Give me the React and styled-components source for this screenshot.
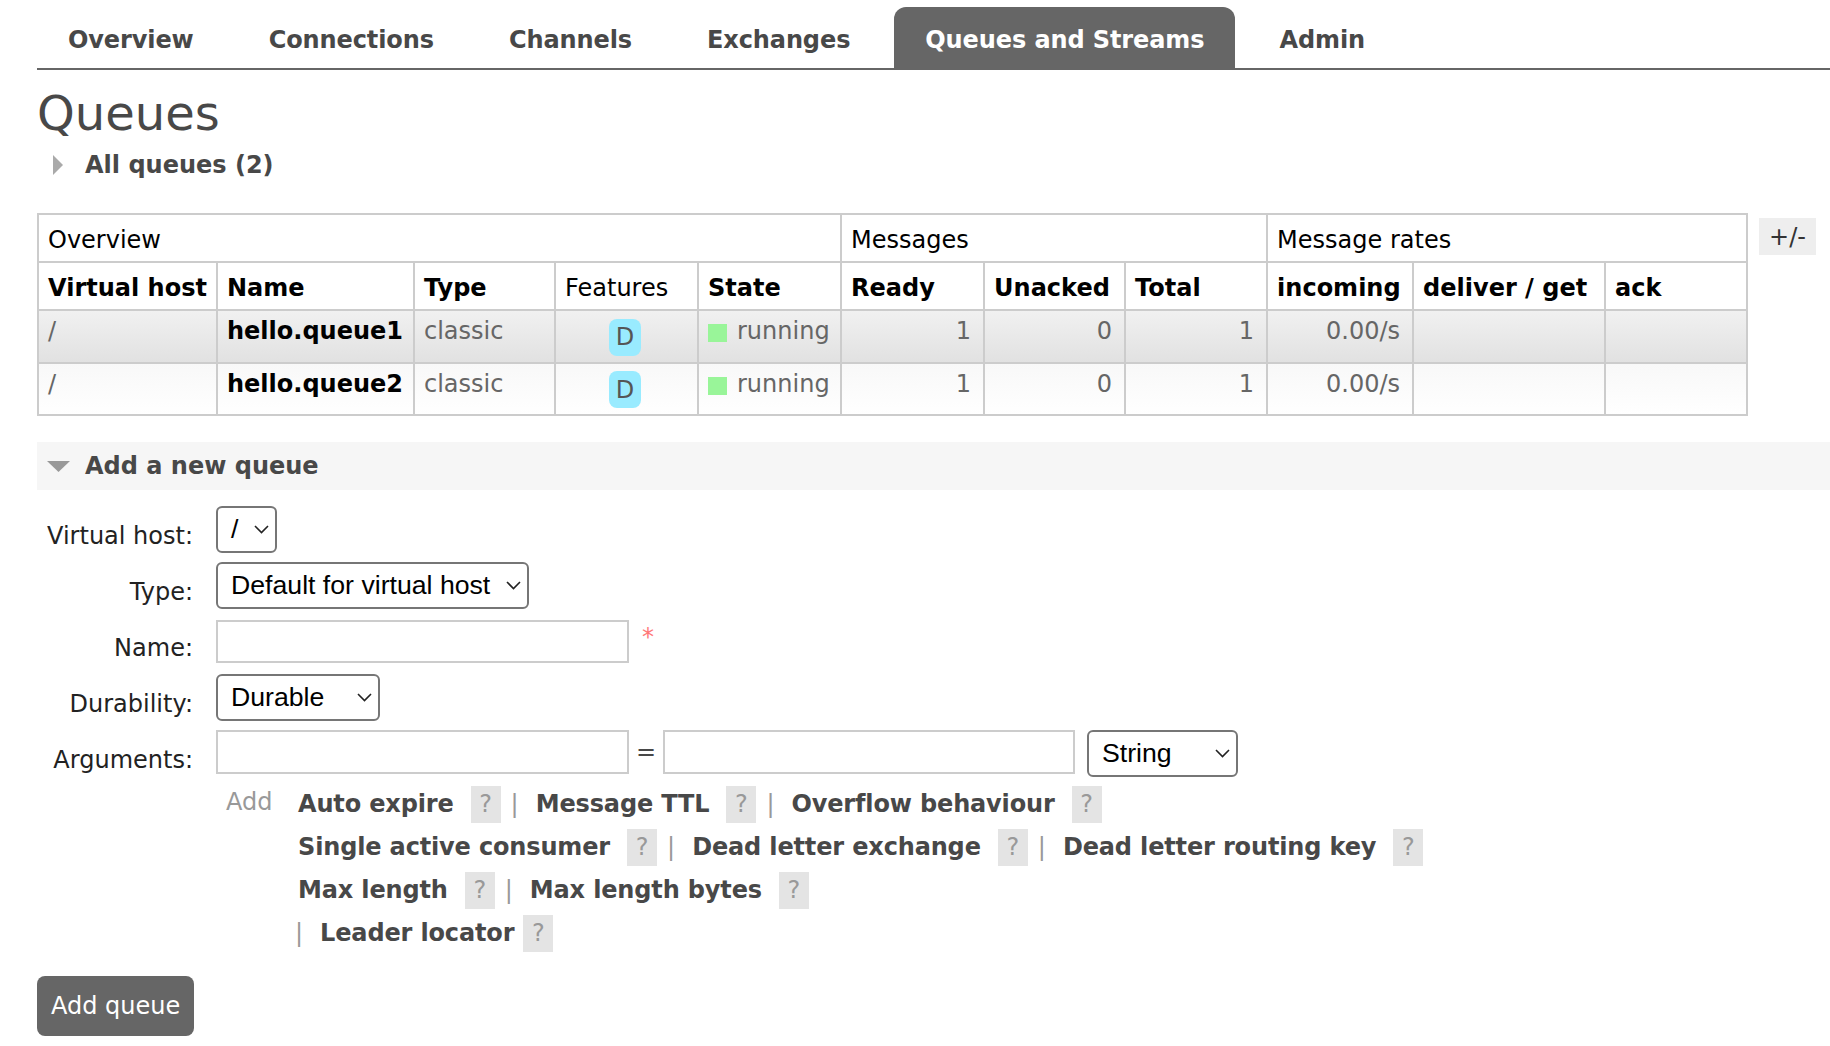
import React from "react";
import styled, { createGlobalStyle } from "styled-components";

const GlobalStyle = createGlobalStyle`
  body {
    margin: 0;
    background: #fff;
    font-family: "DejaVu Sans", Verdana, sans-serif;
    font-size: 24px;
    color: #484848;
  }
`;

const Page = styled.div`
  padding-left: 37px;
`;

const Tabs = styled.ul`
  display: flex;
  gap: 13px;
  margin: 0;
  padding: 7px 0 0;
  list-style: none;
  border-bottom: 2px solid #666;
`;

const Tab = styled.li`
  padding: 19px 31px 14px;
  line-height: 28px;
  font-weight: bold;
  letter-spacing: -0.1px;
  color: ${(p) => (p.$active ? "#fff" : "#484848")};
  background: ${(p) => (p.$active ? "#666" : "transparent")};
  border-radius: 12px 12px 0 0;
`;

const Title = styled.h1`
  margin: 15px 0 0;
  font-size: 48px;
  line-height: 56px;
  font-weight: normal;
  color: #484848;
`;

const Toggle = styled.h2`
  display: flex;
  align-items: center;
  margin: 10px 0 0;
  padding-left: 16px;
  gap: 22px;
  font-size: 24px;
  line-height: 28px;
  font-weight: bold;
  color: #484848;
`;

const TableArea = styled.div`
  display: flex;
  align-items: flex-start;
  margin-top: 34px;
`;

const Table = styled.table`
  border-collapse: collapse;
  table-layout: fixed;
  width: 1709px;
`;

const Th = styled.th`
  border: 2px solid #ccc;
  padding: 11px 12px 7px 9px;
  line-height: 28px;
  text-align: left;
  font-weight: ${(p) => (p.$normal ? "normal" : "bold")};
  color: #000;
  white-space: nowrap;
  overflow: hidden;
`;

const Row = styled.tr`
  background: ${(p) =>
    p.$alt
      ? "linear-gradient(#f8f8f8, #ffffff)"
      : "linear-gradient(#f1f1f1, #e1e1e1)"};
`;

const Td = styled.td`
  border: 2px solid #ccc;
  padding: 6px 12px 6px 9px;
  line-height: 28px;
  vertical-align: top;
  white-space: nowrap;
  color: ${(p) => (p.$strong ? "#000" : "#666")};
  font-weight: ${(p) => (p.$strong ? "bold" : "normal")};
  text-align: ${(p) => p.$align || "left"};
`;

const Badge = styled.abbr`
  display: inline-block;
  padding: 4.5px 7px;
  line-height: 28px;
  background: #99ebff;
  color: #555;
  border-radius: 8px;
  text-decoration: none;
  vertical-align: -6px;
`;

const StatusDot = styled.span`
  display: inline-block;
  width: 19px;
  height: 18px;
  margin-right: 10px;
  background: #99f599;
  vertical-align: -3px;
`;

const ToggleColumns = styled.div`
  margin: 5px 0 0 11px;
  padding: 4.5px 10px;
  line-height: 28px;
  background: #eee;
  color: #333;
`;

const SectionBar = styled.h2`
  display: flex;
  align-items: center;
  gap: 15px;
  margin: 26px 0 0;
  padding: 10px 0 10px 10px;
  background: #f6f6f6;
  font-size: 24px;
  line-height: 28px;
  font-weight: bold;
  color: #484848;
`;

const Form = styled.div`
  margin-top: 11px;
`;

const FormRow = styled.div`
  display: grid;
  grid-template-columns: 156px 1fr;
  column-gap: 23px;
  align-items: center;
  height: ${(p) => (p.$auto ? "auto" : "56px")};
`;

const Label = styled.label`
  text-align: right;
  padding-top: 14px;
  line-height: 28px;
  color: #222;
  white-space: nowrap;
`;

const Controls = styled.div`
  display: flex;
  align-items: ${(p) => p.$align || "center"};
`;

const SelectBox = styled.div`
  box-sizing: border-box;
  display: flex;
  align-items: center;
  justify-content: space-between;
  width: ${(p) => p.$width}px;
  height: 47px;
  padding: 0 6px 0 13px;
  border: 2px solid #767676;
  border-radius: 6px;
  font-family: "Liberation Sans", Arial, sans-serif;
  font-size: 26.67px;
  color: #000;
  background: #fff;
`;

const TextInput = styled.input`
  box-sizing: border-box;
  width: ${(p) => p.$width}px;
  height: ${(p) => p.$height || 44}px;
  border: 2px solid #ccc;
  padding: 0 6px;
  font-size: 24px;
  outline: none;
`;

const Required = styled.span`
  margin: -8px 0 0 13px;
  color: #f77;
`;

const Equals = styled.span`
  width: 34px;
  text-align: center;
  line-height: 44px;
  color: #484848;
`;

const Spacer = styled.span`
  width: 12px;
`;

const AddText = styled.div`
  padding: 2px 0 0 10px;
  line-height: 28px;
  color: #999;
`;

const LinksGrid = styled.div`
  display: grid;
  grid-template-columns: 82px 1fr;
  margin-top: 4.5px;
`;

const LinkLine = styled.div`
  display: flex;
  align-items: center;
  height: 37px;
  margin-left: ${(p) => p.$indent || 0}px;
  & + & {
    margin-top: 6px;
  }
`;

const ArgLink = styled.span`
  font-weight: bold;
  letter-spacing: -0.15px;
  color: #484848;
  white-space: nowrap;
`;

const Help = styled.span`
  display: inline-flex;
  align-items: center;
  justify-content: center;
  width: 30px;
  height: 37px;
  margin-left: ${(p) => (p.$gap === undefined ? 17 : p.$gap)}px;
  background: #e4e4e4;
  color: #999;
`;

const Sep = styled.span`
  margin: 0 17px 0 10px;
  color: #999;
`;

const SubmitButton = styled.button`
  display: block;
  margin-top: 24px;
  padding: 16px 14px;
  border: 0;
  border-radius: 8px;
  background: #666;
  color: #fff;
  font-family: inherit;
  font-size: 24px;
  line-height: 28px;
`;

function Chevron() {
  return (
    <svg width="15" height="9" viewBox="0 0 15 9">
      <polyline points="1,1 7.5,7.5 14,1" fill="none" stroke="#222" strokeWidth="1.6" />
    </svg>
  );
}

function Select({ value, width }) {
  return (
    <SelectBox $width={width}>
      <span>{value}</span>
      <Chevron />
    </SelectBox>
  );
}

const tabs = ["Overview", "Connections", "Channels", "Exchanges", "Queues and Streams", "Admin"];
const widths = [179, 197, 141, 143, 143, 143, 141, 142, 146, 192, 142];
const queues = ["hello.queue1", "hello.queue2"];

export default function App() {
  return (
    <Page>
      <GlobalStyle />
      <Tabs>
        {tabs.map((t) => (
          <Tab key={t} $active={t === "Queues and Streams"}>
            {t}
          </Tab>
        ))}
      </Tabs>

      <Title>Queues</Title>
      <Toggle>
        <svg width="10" height="20" viewBox="0 0 10 20">
          <polygon points="0,0 10,10 0,20" fill="#aaa" />
        </svg>
        All queues (2)
      </Toggle>

      <TableArea>
        <Table>
          <colgroup>
            {widths.map((w, i) => (
              <col key={i} style={{ width: w }} />
            ))}
          </colgroup>
          <thead>
            <tr>
              <Th $normal colSpan={5}>Overview</Th>
              <Th $normal colSpan={3}>Messages</Th>
              <Th $normal colSpan={3}>Message rates</Th>
            </tr>
            <tr>
              <Th>Virtual host</Th>
              <Th>Name</Th>
              <Th>Type</Th>
              <Th $normal>Features</Th>
              <Th>State</Th>
              <Th>Ready</Th>
              <Th>Unacked</Th>
              <Th>Total</Th>
              <Th>incoming</Th>
              <Th>deliver / get</Th>
              <Th>ack</Th>
            </tr>
          </thead>
          <tbody>
            {queues.map((q, i) => (
              <Row key={q} $alt={i % 2 === 1}>
                <Td>/</Td>
                <Td $strong>{q}</Td>
                <Td>classic</Td>
                <Td $align="center">
                  <Badge title="durable: true">D</Badge>
                </Td>
                <Td>
                  <StatusDot />
                  running
                </Td>
                <Td $align="right">1</Td>
                <Td $align="right">0</Td>
                <Td $align="right">1</Td>
                <Td $align="right">0.00/s</Td>
                <Td />
                <Td />
              </Row>
            ))}
          </tbody>
        </Table>
        <ToggleColumns>+/-</ToggleColumns>
      </TableArea>

      <SectionBar>
        <svg width="23" height="11" viewBox="0 0 23 11">
          <polygon points="0,0 23,0 11.5,11" fill="#999" />
        </svg>
        Add a new queue
      </SectionBar>

      <Form>
        <FormRow>
          <Label>Virtual host:</Label>
          <Controls>
            <Select value="/" width={61} />
          </Controls>
        </FormRow>
        <FormRow>
          <Label>Type:</Label>
          <Controls>
            <Select value="Default for virtual host" width={313} />
          </Controls>
        </FormRow>
        <FormRow>
          <Label>Name:</Label>
          <Controls>
            <TextInput $width={413} $height={43} />
            <Required>*</Required>
          </Controls>
        </FormRow>
        <FormRow>
          <Label>Durability:</Label>
          <Controls>
            <Select value="Durable" width={164} />
          </Controls>
        </FormRow>
        <FormRow>
          <Label>Arguments:</Label>
          <Controls $align="flex-start">
            <TextInput $width={413} />
            <Equals>=</Equals>
            <TextInput $width={412} />
            <Spacer />
            <Select value="String" width={151} />
          </Controls>
        </FormRow>
        <FormRow $auto>
          <span />
          <LinksGrid>
            <AddText>Add</AddText>
            <div>
              <LinkLine>
                <ArgLink>Auto expire</ArgLink>
                <Help>?</Help>
                <Sep>|</Sep>
                <ArgLink>Message TTL</ArgLink>
                <Help>?</Help>
                <Sep>|</Sep>
                <ArgLink>Overflow behaviour</ArgLink>
                <Help>?</Help>
              </LinkLine>
              <LinkLine>
                <ArgLink>Single active consumer</ArgLink>
                <Help>?</Help>
                <Sep>|</Sep>
                <ArgLink>Dead letter exchange</ArgLink>
                <Help>?</Help>
                <Sep>|</Sep>
                <ArgLink>Dead letter routing key</ArgLink>
                <Help>?</Help>
              </LinkLine>
              <LinkLine>
                <ArgLink>Max length</ArgLink>
                <Help>?</Help>
                <Sep>|</Sep>
                <ArgLink>Max length bytes</ArgLink>
                <Help>?</Help>
              </LinkLine>
              <LinkLine $indent={-13}>
                <Sep>|</Sep>
                <ArgLink>Leader locator</ArgLink>
                <Help $gap={9}>?</Help>
              </LinkLine>
            </div>
          </LinksGrid>
        </FormRow>
      </Form>

      <SubmitButton>Add queue</SubmitButton>
    </Page>
  );
}
